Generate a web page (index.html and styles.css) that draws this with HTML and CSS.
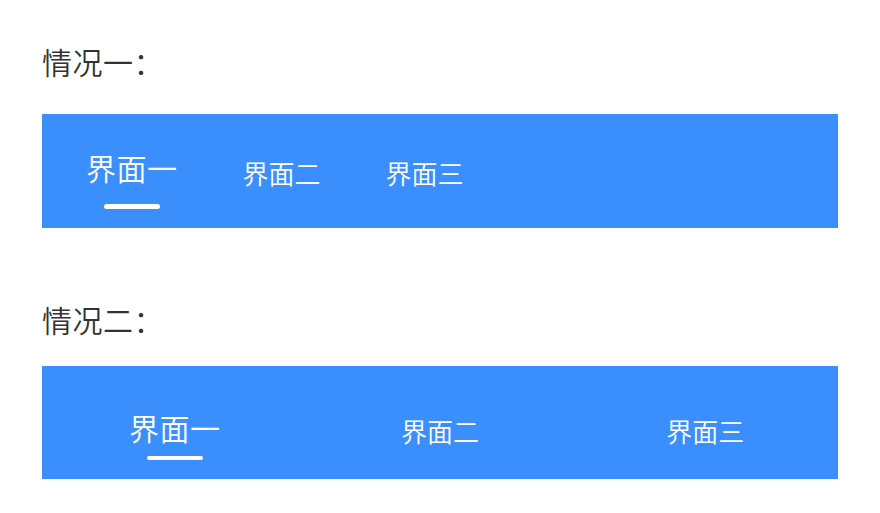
FILE: index.html
```html
<!DOCTYPE html>
<html lang="zh-CN">
<head>
<meta charset="utf-8">
<title>Tabs</title>
<link rel="stylesheet" href="styles.css">
</head>
<body>
  <section class="case">
    <h2 class="case-title">情况一：</h2>
    <nav class="tabbar tabbar-scroll">
      <div class="tab active"><span class="tab-label">界面一</span><span class="tab-line"></span></div>
      <div class="tab"><span class="tab-label">界面二</span></div>
      <div class="tab"><span class="tab-label">界面三</span></div>
    </nav>
  </section>
  <section class="case case-second">
    <h2 class="case-title">情况二：</h2>
    <nav class="tabbar tabbar-fill">
      <div class="tab active"><span class="tab-label">界面一</span><span class="tab-line"></span></div>
      <div class="tab"><span class="tab-label">界面二</span></div>
      <div class="tab"><span class="tab-label">界面三</span></div>
    </nav>
  </section>
</body>
</html>
```
FILE: styles.css
```css
html, body {
  margin: 0;
  background: #ffffff;
}

body {
  padding: 46px 42px 0 42px;
  font-family: "Noto Sans CJK SC", "Noto Sans", sans-serif;
  font-weight: 350;
}

.case-title {
  margin: 0 0 38px 0;
  font-size: 30px;
  line-height: 30px;
  font-weight: 350;
  letter-spacing: 0.5px;
  color: #333333;
}

.case-second {
  margin-top: 76px;
}

.case-second .case-title {
  margin-bottom: 32px;
}

.tabbar {
  display: flex;
  align-items: flex-start;
  width: 796px;
  height: 114px;
  background: #3b8ffd;
  box-sizing: border-box;
}

.tabbar-fill {
  height: 113px;
}

.tabbar-scroll {
  padding-left: 44px;
  gap: 65px;
}

.tabbar-fill .tab {
  flex: 1;
}

.tab {
  display: flex;
  flex-direction: column;
  align-items: center;
  color: #ffffff;
}

.tab-label {
  display: block;
  font-size: 26px;
  line-height: 26px;
  margin-top: 46px;
  white-space: nowrap;
}

.tab.active .tab-label {
  font-size: 30px;
  line-height: 30px;
  letter-spacing: 0.5px;
  margin-top: 38px;
}

.tab-line {
  display: block;
  width: 56px;
  height: 5px;
  margin-top: 22px;
  border-radius: 3px;
  background: #ffffff;
}

.tabbar-fill .tab-label {
  margin-top: 52px;
}

.tabbar-fill .tab.active .tab-label {
  margin-top: 46px;
}

.tabbar-fill .tab-line {
  height: 4px;
  margin-top: 14px;
}
```
